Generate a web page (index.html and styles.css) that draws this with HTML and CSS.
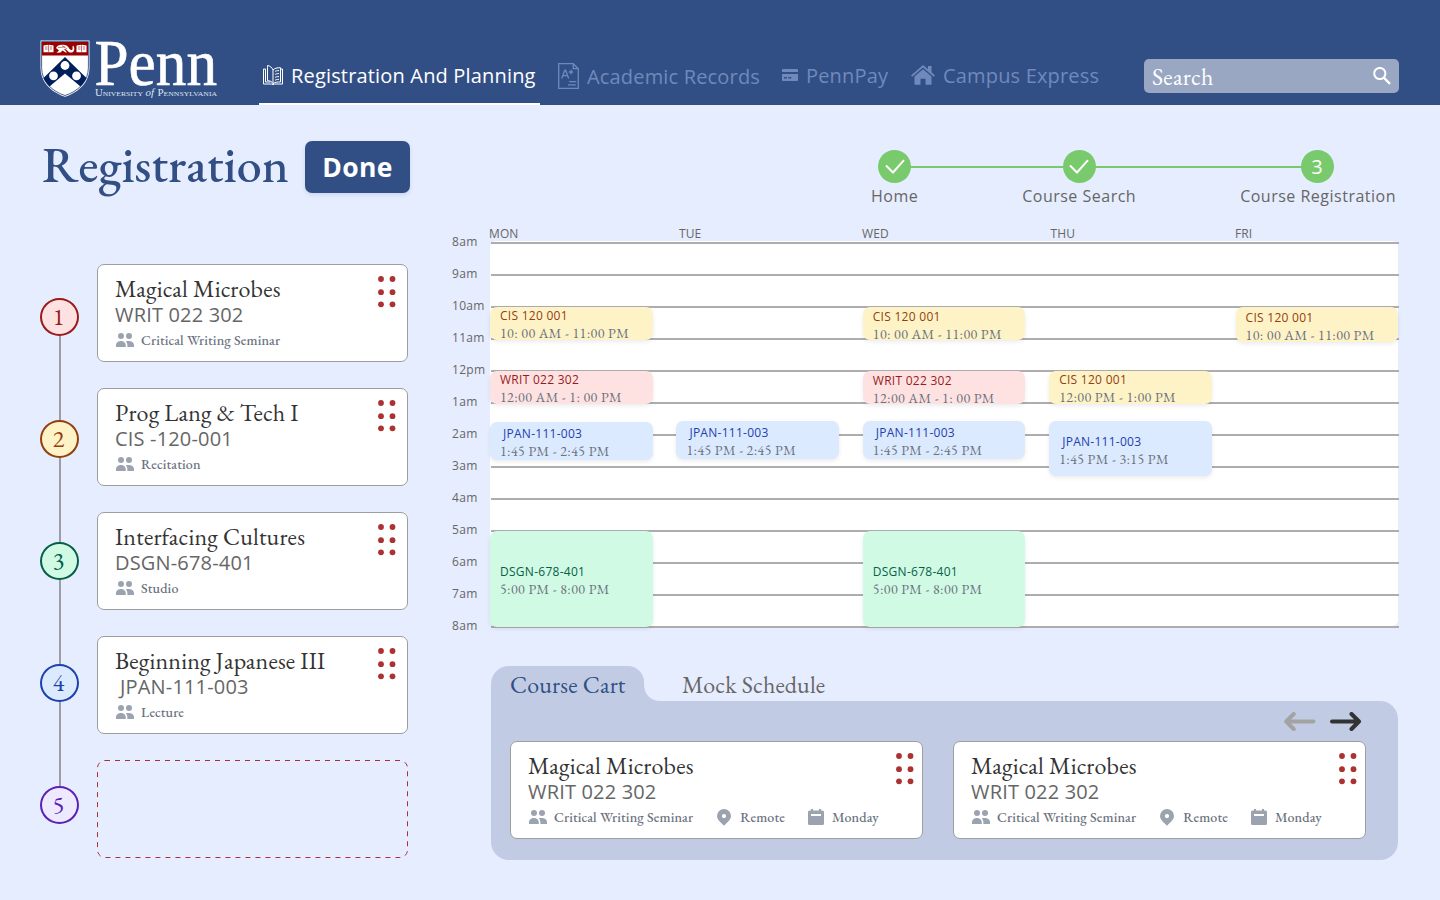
FILE: index.html
```html
<!DOCTYPE html>
<html lang="en">
<head>
<meta charset="utf-8">
<title>Registration - Penn</title>
<link rel="stylesheet" href="styles.css">
</head>
<body>
<svg class="sprite" aria-hidden="true">
  <symbol id="people" viewBox="0 0 18 14"><circle cx="5" cy="3" r="3"/><circle cx="13" cy="3" r="3"/><path d="M0 14v-1.600C0 9.800 2.200 8 5 8s4.800 1.800 4.800 4.400V14zM10.800 8.100C14 7.600 18 8.500 18 12.400V14h-6.600v-1.600c0-1.800-.5-3-1.600-4z"/></symbol>
  <symbol id="pin" viewBox="0 0 14 17"><path fill-rule="evenodd" d="M7 0a7 7 0 0 1 7 7c0 3.800-3.800 6.300-7 9.800C3.800 13.300 0 10.800 0 7a7 7 0 0 1 7-7zm0 5a2.100 2.100 0 1 0 0 4.200A2.100 2.100 0 0 0 7 5z"/></symbol>
  <symbol id="calendar" viewBox="0 0 16 16"><path fill-rule="evenodd" d="M3 0h2v1.500h6V0h2v1.500h1.500A1.500 1.500 0 0 1 16 3v11.500a1.500 1.500 0 0 1-1.500 1.500h-13A1.500 1.500 0 0 1 0 14.500V3a1.500 1.500 0 0 1 1.500-1.500H3zM3 5v2h10V5z"/></symbol>
  <symbol id="drag" viewBox="0 0 18 32"><circle cx="3" cy="3" r="2.900"/><circle cx="14.500" cy="3" r="2.900"/><circle cx="3" cy="16.200" r="2.900"/><circle cx="14.500" cy="16.200" r="2.900"/><circle cx="3" cy="28.300" r="2.900"/><circle cx="14.500" cy="28.300" r="2.900"/></symbol>
</svg>

<header class="topbar">
  <svg class="logo" viewBox="0 0 178 58" width="178" height="58" role="img" aria-label="Penn">
    <path d="M.5.500h49v27C49.500 43 38 52.500 25 56.800 12 52.500.5 43 .5 27.500z" fill="#fff"/>
    <path d="M1.600 1.600h46.800v26C48.400 42 37.500 51.500 25 55.500 12.500 51.500 1.600 42 1.600 27.600z" fill="#fff" stroke="#011f5b" stroke-width=".7"/>
    <path d="M2 2h46v13.500H2z" fill="#900"/>
    <path d="M25 17l21.500 21c-1.400 3.200-3.400 6-6 8.400L25 33.500 9.500 46.400c-2.600-2.400-4.600-5.200-6-8.400z" fill="#011f5b"/>
    <circle cx="25" cy="25.500" r="4.400" fill="#fff"/><circle cx="13.500" cy="35.800" r="4.400" fill="#fff"/><circle cx="36.500" cy="35.800" r="4.400" fill="#fff"/>
    <path d="M3.500 5.500l4.500-.8.600.6.600-.6 4.300.8v6.800H3.500zM36.500 5.500l4.500-.8.600.6.600-.6 4.300.8v6.800h-10z" fill="#fff"/>
    <path d="M5 7h2.500M5 9h2.500M10 7h2M10 9h2M8.600 5.300v6.500M38 7h2.500M38 9h2.500M43 7h2M43 9h2M41.600 5.300v6.500" stroke="#900" stroke-width=".6"/>
    <path d="M16 8c1-3 5-4 9-3 4 .8 4 5 6.500 5 2 0 .3-2.500 1.500-4.500 2 2 2 6.500-1.500 7-4 .5-4.500-4-7.500-3.500 1 1 3 3 2.500 4l-4-2.500-2 2-4 .3 2.500-2.300z" fill="#fff"/>
    <path d="M18 7.500l7-.5M22 5.500l5 3.500" stroke="#900" stroke-width=".5"/>
    <text class="logo-name" x="54.500" y="45.300" textLength="122.500" lengthAdjust="spacingAndGlyphs">Penn</text>
    <text class="logo-sub" x="55" y="56" textLength="48" lengthAdjust="spacingAndGlyphs">University</text>
    <text class="logo-of" x="105.500" y="56" textLength="8.500" lengthAdjust="spacingAndGlyphs">of</text>
    <text class="logo-sub" x="117.500" y="56" textLength="59.500" lengthAdjust="spacingAndGlyphs">Pennsylvania</text>
  </svg>
  <nav class="nav">
    <a class="nav-item active">
      <svg width="20" height="20" viewBox="0 0 20 20" fill="none" stroke="currentColor" stroke-width="1"><path d="M2.500 4H.5v15h7.800l1.700.6 1.700-.6h7.800V4h-2M2.500 4v13h5M4.500 2.500v13.200c2.500 0 4.500.8 5.500 3V5C9 2.500 7 .8 4.500.5zM10 5c1.500-1.700 4-2.300 7.500-2.300V17c-3.500 0-6 0-7.500 1.800M12 6.500c1-.7 2-.9 4-.9M12 9.500c1-.7 2-.9 4-.9M12 12.500c1-.7 2-.9 4-.9M12 15.300c1-.7 2-.9 4-.9"/></svg>
      <span>Registration And Planning</span>
    </a>
    <a class="nav-item records">
      <svg width="21" height="26" viewBox="0 0 21 26" fill="none" stroke="currentColor" stroke-width="1.300"><path d="M.7.700h14.600l5 5v19.600H.7zM15.300.700v5h5"/><path d="M3.700 15.500l3.100-8.300h.8l3.100 8.300M4.800 12.700h4.800M13 6.800v4.400M10.800 9h4.400M11.200 18.600h6.600v-.1M10 21.800h7.800"/></svg>
      <span>Academic Records</span>
    </a>
    <a class="nav-item pay">
      <svg width="16" height="12" viewBox="0 0 16 12" fill="currentColor"><path fill-rule="evenodd" d="M1 0h14a1 1 0 0 1 1 1v2H0V1a1 1 0 0 1 1-1zM0 5h16v6a1 1 0 0 1-1 1H1a1 1 0 0 1-1-1zm2 3v1.500h3V8zm4.300 0v1.500h3V8z"/></svg>
      <span>PennPay</span>
    </a>
    <a class="nav-item campus">
      <svg width="24" height="20" viewBox="0 0 24 20" fill="currentColor"><path d="M12 0l5 4.300V1h3.500v6.300L24 10.400l-1.200 1.400L12 2.500 1.200 11.800 0 10.400z"/><path d="M12 4.200l8.500 7.300V19a.8.800 0 0 1-.8.800h-5.200v-6h-5v6H4.300a.8.800 0 0 1-.8-.8v-7.500z"/></svg>
      <span>Campus Express</span>
    </a>
  </nav>
  <div class="search">
    <span>Search</span>
    <svg width="18" height="18" viewBox="0 0 18 18" fill="none" stroke="#fff"><circle cx="6.800" cy="6.500" r="5.600" stroke-width="2"/><path d="M10.800 10.600l6.200 6.300" stroke-width="2.300"/></svg>
  </div>
</header>

<main class="page">
  <section class="plan">
    <div class="title-row"><h1>Registration</h1><button class="done">Done</button></div>
    <div class="ranked">
      <div class="ranks">
        <span class="rank red">1</span><i></i><span class="rank amber">2</span><i></i><span class="rank green">3</span><i></i><span class="rank blue">4</span><i></i><span class="rank violet">5</span>
      </div>
      <div class="cards">
        <article class="card"><div class="card-main"><h2>Magical Microbes</h2><p class="code">WRIT 022 302</p><p class="meta"><svg class="ic-people"><use href="#people"/></svg><span>Critical Writing Seminar</span></p></div><svg class="drag"><use href="#drag"/></svg></article>
        <article class="card"><div class="card-main"><h2>Prog Lang &amp; Tech I</h2><p class="code">CIS -120-001</p><p class="meta"><svg class="ic-people"><use href="#people"/></svg><span>Recitation</span></p></div><svg class="drag"><use href="#drag"/></svg></article>
        <article class="card"><div class="card-main"><h2>Interfacing Cultures</h2><p class="code">DSGN-678-401</p><p class="meta"><svg class="ic-people"><use href="#people"/></svg><span>Studio</span></p></div><svg class="drag"><use href="#drag"/></svg></article>
        <article class="card"><div class="card-main"><h2>Beginning Japanese III</h2><p class="code indent">JPAN-111-003</p><p class="meta"><svg class="ic-people"><use href="#people"/></svg><span>Lecture</span></p></div><svg class="drag"><use href="#drag"/></svg></article>
        <svg class="dropzone" viewBox="0 0 311 98"><rect x=".5" y=".5" width="310" height="97" rx="7.500"/></svg>
      </div>
    </div>
  </section>

  <section class="board">
    <ol class="stepper">
      <li><span class="dot"><svg width="20" height="15" viewBox="0 0 20 15"><path d="M1 6.500l7 7L19 1.200"/></svg></span><span class="label">Home</span></li>
      <li><span class="dot"><svg width="20" height="15" viewBox="0 0 20 15"><path d="M1 6.500l7 7L19 1.200"/></svg></span><span class="label">Course Search</span></li>
      <li><span class="dot">3</span><span class="label">Course Registration</span></li>
    </ol>

    <div class="schedule">
      <div class="hours"><span>8am</span><span>9am</span><span>10am</span><span>11am</span><span>12pm</span><span>1am</span><span>2am</span><span>3am</span><span>4am</span><span>5am</span><span>6am</span><span>7am</span><span>8am</span></div>
      <div class="week">
        <div class="days"><span>MON</span><span class="tue">TUE</span><span>WED</span><span class="thu">THU</span><span>FRI</span></div>
        <div class="slots">
          <div class="lines"><i></i><i></i><i></i><i></i><i></i><i></i><i></i><i></i><i></i><i></i><i></i><i></i><i></i></div>
          <div class="day">
            <div class="event amber at10"><b>CIS 120 001</b><span>10: 00 AM - 11:00 PM</span></div>
            <div class="event red at12"><b>WRIT 022 302</b><span>12:00 AM - 1: 00 PM</span></div>
            <div class="event blue at145 low"><b>JPAN-111-003</b><span>1:45 PM - 2:45 PM</span></div>
            <div class="event green at5"><b>DSGN-678-401</b><span>5:00 PM - 8:00 PM</span></div>
          </div>
          <div class="day">
            <div class="event blue at145"><b>JPAN-111-003</b><span>1:45 PM - 2:45 PM</span></div>
          </div>
          <div class="day">
            <div class="event amber at10 mid"><b>CIS 120 001</b><span>10: 00 AM - 11:00 PM</span></div>
            <div class="event red at12 mid"><b>WRIT 022 302</b><span>12:00 AM - 1: 00 PM</span></div>
            <div class="event blue at145"><b>JPAN-111-003</b><span>1:45 PM - 2:45 PM</span></div>
            <div class="event green at5"><b>DSGN-678-401</b><span>5:00 PM - 8:00 PM</span></div>
          </div>
          <div class="day">
            <div class="event amber at12"><b>CIS 120 001</b><span>12:00 PM - 1:00 PM</span></div>
            <div class="event blue at145 long"><b>JPAN-111-003</b><span>1:45 PM - 3:15 PM</span></div>
          </div>
          <div class="day">
            <div class="event amber at10 tall"><b>CIS 120 001</b><span>10: 00 AM - 11:00 PM</span></div>
          </div>
        </div>
      </div>
    </div>

    <div class="cart">
      <div class="tabs">
        <span class="tab current">Course Cart</span>
        <svg class="notch" width="17" height="17" viewBox="0 0 17 17"><path d="M0 0c0 10 6 17 17 17H0z"/></svg>
        <span class="tab">Mock Schedule</span>
      </div>
      <div class="cart-body">
        <div class="arrows">
          <svg width="32" height="20" viewBox="0 0 32 20" stroke="#a3a3a3"><path d="M29.500 9.500H3M9.700 2L2.200 9.500l7.500 7.500"/></svg>
          <svg width="32" height="20" viewBox="0 0 32 20" stroke="#333"><path d="M2 9.500H29M21.500 2l7.500 7.500-7.500 7.500"/></svg>
        </div>
        <div class="cart-cards">
          <article class="card"><div class="card-main"><h2>Magical Microbes</h2><p class="code">WRIT 022 302</p><p class="meta"><svg class="ic-people"><use href="#people"/></svg><span>Critical Writing Seminar</span><svg class="ic-pin"><use href="#pin"/></svg><span>Remote</span><svg class="ic-cal"><use href="#calendar"/></svg><span>Monday</span></p></div><svg class="drag"><use href="#drag"/></svg></article>
          <article class="card"><div class="card-main"><h2>Magical Microbes</h2><p class="code">WRIT 022 302</p><p class="meta"><svg class="ic-people"><use href="#people"/></svg><span>Critical Writing Seminar</span><svg class="ic-pin"><use href="#pin"/></svg><span>Remote</span><svg class="ic-cal"><use href="#calendar"/></svg><span>Monday</span></p></div><svg class="drag"><use href="#drag"/></svg></article>
        </div>
      </div>
    </div>
  </section>
</main>
</body>
</html>
```
FILE: styles.css
```css
:root {
  --navy: #324f85;
  --serif: "EB Garamond", "Liberation Serif", serif;
  --sans: "Open Sans", "Noto Sans", sans-serif;
}
* { box-sizing: border-box; }
body { margin: 0; width: 1440px; height: 900px; overflow: hidden; background: #e6edfe; font-family: var(--sans); }
h1, h2, p, ol { margin: 0; padding: 0; font-weight: 400; }
ol { list-style: none; }
svg { display: block; flex: none; }
.sprite { display: none; }

/* Top bar */
.topbar { display: flex; align-items: flex-end; height: 105px; padding: 0 41px 0 40px; background: var(--navy); }
.logo { margin-bottom: 7px; }
.logo-name { font: 65px "Liberation Serif", serif; fill: #fff; stroke: #fff; stroke-width: .6px; }
.logo-sub { font: 10px "Liberation Serif", serif; font-variant: small-caps; fill: #dfe5f0; }
.logo-of { font: italic 10px "Liberation Serif", serif; fill: #dfe5f0; }
.nav { display: flex; margin-left: 41px; color: #7089bc; font-size: 20px; letter-spacing: .17px; white-space: nowrap; }
.nav-item { display: flex; align-items: center; height: 58px; }
.nav-item.active { width: 281px; padding-left: 4px; gap: 8px; color: #fff; border-bottom: 2px solid #fff; }
.records { width: 224px; margin-left: 18px; gap: 8px; }
.pay { width: 129px; gap: 8px; padding-bottom: 2px; }
.campus { gap: 8px; padding-bottom: 2px; }
.search { display: flex; align-items: center; justify-content: space-between; width: 255px; height: 34px; margin: 0 0 12px auto; padding: 0 8px; border-radius: 5px; background: #99a7c3; color: #fff; font: 24px var(--serif); letter-spacing: .2px; }

.page { display: flex; gap: 42px; padding: 36px 42px 0 40px; }
.plan { width: 370px; }
.title-row { display: flex; align-items: center; justify-content: space-between; height: 52px; padding-left: 2px; }
h1 { padding-bottom: 5px; font: 500 50px var(--serif); color: var(--navy); }
.done { width: 105px; height: 52px; padding: 0; border: 0; border-radius: 7px; background: var(--navy); color: #fff; font: 700 26.500px var(--sans); letter-spacing: .4px; box-shadow: 0 2px 4px rgba(50, 79, 133, .15); }

/* Ranked courses */
.ranked { display: flex; gap: 18px; padding-top: 71px; }
.ranks { display: flex; flex-direction: column; align-items: center; width: 39px; padding-top: 34px; }
.ranks i { width: 2px; height: 84px; background: #9c9ea3; }
.rank { display: flex; align-items: center; justify-content: center; width: 39px; height: 38px; padding: 0 2px 1px 0; border: 2px solid; border-radius: 50%; font: 24px var(--serif); }
.red { background: #fee2e2; color: #991b1b; }
.amber { background: #fef3c7; color: #92400e; }
.green { background: #d1fae5; color: #065f46; }
.blue { background: #dbeafe; color: #1e40af; }
.violet { background: #ede9fe; color: #5b21b6; }
.cards { display: flex; flex-direction: column; gap: 26px; }
.card { display: flex; justify-content: space-between; width: 311px; height: 98px; padding: 11px 11px 0 17px; border: 1px solid #9e9e9e; border-radius: 7px; background: #fff; }
.card h2 { height: 26px; font: 24px/25px var(--serif); letter-spacing: .17px; color: #333; }
.code { height: 25px; font-size: 20px; line-height: 26px; letter-spacing: .17px; color: #666; white-space: nowrap; }
.indent { padding-left: 5px; }
.meta { display: flex; align-items: center; height: 26px; font: 500 14px var(--serif); letter-spacing: .11px; color: #6b7280; fill: #9ca3b0; white-space: nowrap; }
.ic-people { width: 18px; height: 14px; margin: 0 7px 0 1px; }
.ic-pin { width: 14px; height: 17px; margin: 0 9px 0 24px; }
.ic-cal { width: 16px; height: 16px; margin: 0 8px 0 23px; }
.drag { width: 18px; height: 32px; fill: #ac3232; }
.dropzone { width: 311px; height: 98px; fill: none; stroke: #ac3232; stroke-dasharray: 5 5; }

/* Progress steps */
.board { width: 946px; }
.stepper { position: relative; display: flex; justify-content: flex-end; gap: 104px; height: 76px; padding: 9px 2px 0 0; }
.stepper::before { content: ""; position: absolute; left: 443px; top: 25px; width: 423px; height: 2px; background: #78ca6c; }
.stepper li { position: relative; display: flex; flex-direction: column; align-items: center; }
.stepper li:last-child .dot { margin-right: 2px; }
.dot { display: flex; align-items: center; justify-content: center; width: 33px; height: 33px; border-radius: 50%; background: #78ca6c; color: #fff; font-size: 20px; }
.dot svg { fill: none; stroke: #fff; stroke-width: 2; }
.label { margin-top: 2px; font-size: 16px; line-height: 22px; letter-spacing: .5px; color: #666; white-space: nowrap; }

/* Week schedule */
.schedule { display: flex; height: 401px; padding-top: 8px; }
.hours { display: flex; flex-direction: column; width: 38px; padding-top: 1px; font-size: 12px; line-height: 32px; letter-spacing: .3px; color: #666; }
.week { width: 908px; }
.days { display: grid; grid-template-columns: repeat(5, 186.500px); height: 16px; margin-left: -1px; font-size: 12px; line-height: 17px; letter-spacing: .1px; color: #666; }
.days .tue { padding-left: 3.500px; }
.days .thu { padding-left: 2px; }
.slots { position: relative; display: flex; width: 908px; height: 385px; border-radius: 6px; background: #fff; }
.lines { position: absolute; inset: 1px -1px auto 1px; display: flex; flex-direction: column; gap: 30px; }
.lines i { height: 2px; background: #adadad; }
.day { position: relative; width: 186.400px; flex: none; }
.event { position: absolute; left: 0; display: flex; flex-direction: column; justify-content: center; width: 162.500px; padding: 2px 0 0 10px; border-radius: 7px; box-shadow: 0 2px 4px rgba(0, 0, 0, .08); white-space: nowrap; }
.event b { height: 17px; font-weight: 400; font-size: 12px; line-height: 18px; letter-spacing: .27px; flex: none; }
.event span { height: 18px; font: 14px/18px var(--serif); letter-spacing: .4px; color: #6b7280; flex: none; }
.event.blue b { padding-left: 3px; }
.at10 { top: 66px; height: 33px; }
.at10.mid, .at12.mid { padding-top: 3px; }
.at10.tall { height: 35px; padding-top: 3px; }
.at12 { top: 130px; height: 33px; }
.at145 { top: 180px; height: 38px; }
.at145.low { top: 181px; }
.at145.long { height: 55px; padding-top: 4px; }
.at5 { top: 290px; height: 96px; }

/* Course cart */
.cart { width: 907px; margin: 48px 0 0 39px; }
.tabs { display: flex; align-items: flex-end; height: 35px; }
.tab { height: 35px; padding: 1px 0 0 21px; font: 24px/35px var(--serif); letter-spacing: .17px; color: #666; }
.tab.current { width: 153px; padding: 1px 0 0 19px; border-radius: 18px 16px 0 0; background: #c1cce4; color: var(--navy); }
.notch { fill: #c1cce4; }
.cart-body { height: 159px; padding: 11px 32px 0 19px; border-radius: 0 18px 18px 18px; background: #c1cce4; }
.arrows { display: flex; justify-content: flex-end; gap: 14px; height: 29px; padding-right: 4px; }
.arrows svg { fill: none; stroke-width: 4; stroke-linecap: round; stroke-linejoin: round; }
.cart-cards { display: flex; gap: 30px; }
.cart-cards .card { width: 413px; padding-right: 8px; }
```
